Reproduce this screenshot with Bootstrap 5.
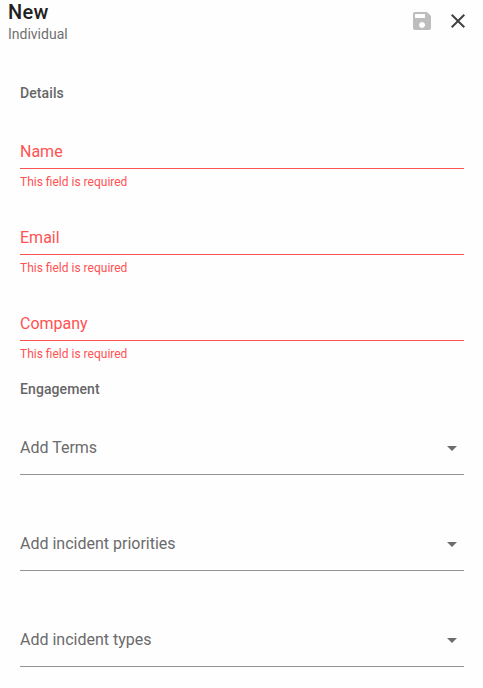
<!DOCTYPE html>
<html lang="en">
<head>
<meta charset="utf-8">
<meta name="viewport" content="width=device-width, initial-scale=1">
<title>New Individual</title>
<link rel="stylesheet" href="https://cdn.jsdelivr.net/npm/bootstrap@5.3.0/dist/css/bootstrap.min.css">
<style>
body{font-family:Roboto,sans-serif;color:#212121;background:#fefefe;overflow:hidden}
.panel-head{height:84px;padding:0 13px 0 8px}
.panel-title{font-size:20px;line-height:24px;font-weight:500;letter-spacing:.25px}
.panel-sub{font-size:14px;line-height:20px;color:#707070}
.head-actions{padding-top:9px;gap:12px}
.panel-form{padding:0 19px 0 20px}
.group-title{font-size:14px;line-height:18px;font-weight:500;letter-spacing:.1px;color:#666}
.group-engage{margin-top:20px}
.field{height:86px;padding-top:40px;color:#ff5252}
.field-label{font-size:16px;line-height:20px;height:27px;border-bottom:1px solid #ff5252}
.field-hint{font-size:12px;line-height:14px;margin-top:6px}
.picker{height:96px;padding-top:40px;color:#6b6b6b}
.picker-line{font-size:16px;line-height:20px;height:37px;border-bottom:1px solid #949494}
.picker-line svg{margin-top:-2px}
</style>
</head>
<body>
<header class="panel-head d-flex justify-content-between align-items-start">
  <div>
    <h1 class="panel-title m-0">New</h1>
    <div class="panel-sub">Individual</div>
  </div>
  <div class="head-actions d-flex">
    <svg width="24" height="24" viewBox="0 0 24 24" fill="#bdbdbd"><path d="M17 3H5c-1.11 0-2 .9-2 2v14c0 1.1.89 2 2 2h14c1.1 0 2-.9 2-2V7l-4-4zm-5 16c-1.66 0-3-1.34-3-3s1.34-3 3-3 3 1.34 3 3-1.34 3-3 3zm3-10H5V5h10v4z"/></svg>
    <svg width="24" height="24" viewBox="0 0 24 24" fill="#424242"><path d="M19 6.41L17.59 5 12 10.59 6.41 5 5 6.41 10.59 12 5 17.59 6.41 19 12 13.41 17.59 19 19 17.59 13.41 12z"/></svg>
  </div>
</header>
<main class="panel-form">
  <h2 class="group-title m-0">Details</h2>
  <div class="field"><div class="field-label">Name</div><div class="field-hint">This field is required</div></div>
  <div class="field"><div class="field-label">Email</div><div class="field-hint">This field is required</div></div>
  <div class="field"><div class="field-label">Company</div><div class="field-hint">This field is required</div></div>
  <h2 class="group-title group-engage mb-0">Engagement</h2>
  <div class="picker"><div class="picker-line d-flex justify-content-between"><span>Add Terms</span><svg width="24" height="24" viewBox="0 0 24 24" fill="#6b6b6b"><path d="M7 10l5 5 5-5z"/></svg></div></div>
  <div class="picker"><div class="picker-line d-flex justify-content-between"><span>Add incident priorities</span><svg width="24" height="24" viewBox="0 0 24 24" fill="#6b6b6b"><path d="M7 10l5 5 5-5z"/></svg></div></div>
  <div class="picker"><div class="picker-line d-flex justify-content-between"><span>Add incident types</span><svg width="24" height="24" viewBox="0 0 24 24" fill="#6b6b6b"><path d="M7 10l5 5 5-5z"/></svg></div></div>
</main>
<script src="https://cdn.jsdelivr.net/npm/bootstrap@5.3.0/dist/js/bootstrap.bundle.min.js"></script>
</body>
</html>
